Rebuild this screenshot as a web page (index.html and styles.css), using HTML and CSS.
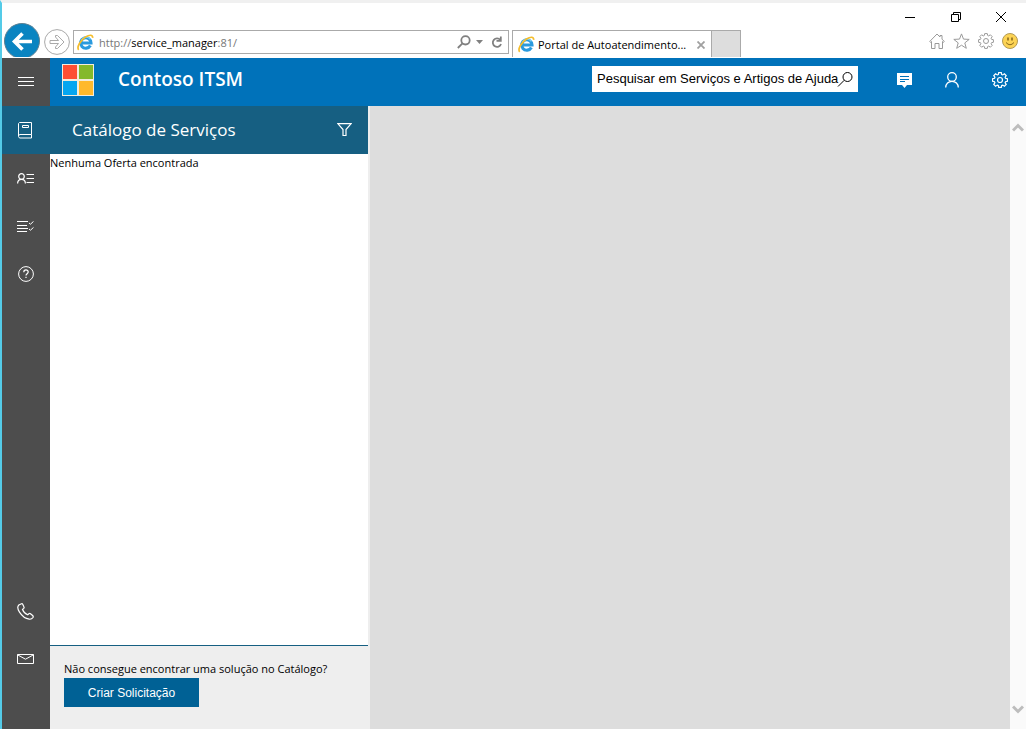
FILE: index.html
```html
<!DOCTYPE html>
<html lang="pt-BR">
<head>
  <meta charset="UTF-8">
  <meta name="viewport" content="width=device-width, initial-scale=1.0">
  <title>Portal de Autoatendimento</title>
  <link rel="stylesheet" href="styles.css">
</head>
<body>
  <svg width="0" height="0" class="defs" aria-hidden="true">
    <symbol id="ie" viewBox="0 0 16 16">
      <path d="M12.600 10.800a4.900 4.900 0 1 1 .6-2.400H4.400" fill="none" stroke="#2a9ade" stroke-width="2.900"/>
      <path d="M4 5.600a5.200 5.200 0 0 1 8.600-.5" fill="none" stroke="#7fd2f6" stroke-width="1"/>
      <path d="M1.600 14.900C-.6 12.600 3.200 5.900 8 2.900c3.600-2.300 7-2.600 6.700.8" fill="none" stroke="#f5bd2c" stroke-width="1.600"/>
    </symbol>
    <symbol id="gear" viewBox="0 0 16 16">
      <path d="M6.700 .6h2.600l.4 1.900 1 .4 1.700-1.100 1.800 1.800-1.100 1.700.4 1 1.900.4v2.600l-1.900.4-.4 1 1.100 1.700-1.800 1.800-1.700-1.100-1 .4-.4 1.900H6.700l-.4-1.900-1-.4-1.700 1.100-1.800-1.800 1.100-1.700-.4-1-1.900-.4V6.700l1.900-.4.4-1-1.100-1.700 1.800-1.800 1.700 1.100 1-.4z"/>
      <circle cx="8" cy="8" r="2.500"/>
    </symbol>
  </svg>

  <div class="chrome">
    <div class="toolbar">
      <button class="back" aria-label="Voltar">
        <svg width="36" height="34" viewBox="0 0 36 34"><circle cx="18" cy="18" r="17.500" fill="#0a84c1" stroke="#5d7f91"/><path d="M28 18.500H10M18.500 10.500l-8 8 8 8" fill="none" stroke="#fff" stroke-width="3.600"/></svg>
      </button>
      <button class="forward" aria-label="Avançar">
        <svg width="26" height="26" viewBox="0 0 26 26" fill="none" stroke="#a9a9a9"><circle cx="13" cy="13" r="12.400"/><path d="M6 11.500h8.500L11.500 8V6.500h2l6.500 6.500-6.500 6.500h-2V18l3-3.500H6z"/></svg>
      </button>
      <div class="address">
        <svg width="17" height="17"><use href="#ie"/></svg>
        <span class="url">http://<b>service_manager</b>:81/</span>
        <button aria-label="Pesquisar"><svg width="14" height="14" viewBox="0 0 14 14" fill="none" stroke="#808080" stroke-width="1.800"><circle cx="8.500" cy="5.300" r="4.200"/><path d="M5.500 8.300l-4.700 4.700"/></svg></button>
        <button aria-label="Histórico"><svg width="7" height="4" viewBox="0 0 7 4"><path d="M0 0h7L3.500 4z" fill="#808080"/></svg></button>
        <button aria-label="Atualizar" class="refresh"><svg width="12" height="13" viewBox="0 0 12 13" fill="none" stroke="#808080" stroke-width="1.800"><path d="M9.300 4A4.200 4.200 0 1 0 10 8"/><path d="M9.800 .5v4.400H5.500"/></svg></button>
      </div>
      <div class="tabs">
        <div class="tab">
          <svg width="17" height="17"><use href="#ie"/></svg>
          <span>Portal de Autoatendimento...</span>
          <button aria-label="Fechar guia"><svg width="8" height="8" viewBox="0 0 8 8" stroke="#a0a0a0" stroke-width="1.800"><path d="M.5.5l7 7M7.500.5l-7 7"/></svg></button>
        </div>
        <button class="new-tab" aria-label="Nova guia"></button>
      </div>
    </div>
    <div class="window-side">
      <div class="caption">
        <button aria-label="Minimizar"><svg width="10" height="10" viewBox="0 0 10 10"><path d="M0 5.500h10" stroke="#000"/></svg></button>
        <button aria-label="Restaurar"><svg width="10" height="10" viewBox="0 0 10 10" fill="none" stroke="#000"><path d="M.5 2.500h7v7h-7zM2.500 2.500v-2h7v7h-2"/></svg></button>
        <button aria-label="Fechar"><svg width="10" height="10" viewBox="0 0 10 10" stroke="#000"><path d="M0 0l10 10M10 0L0 10"/></svg></button>
      </div>
      <div class="tools">
        <button aria-label="Início"><svg width="16" height="16" viewBox="0 0 16 16" fill="none" stroke="#9a9a9a"><path d="M.7 8.500L8 1l3 3V2.500h2v3.600l2.300 2.400-1 .8-.8-.8v7h-3.500v-5H6v5H2.500v-7l-.8.8z"/></svg></button>
        <button aria-label="Favoritos"><svg width="17" height="16" viewBox="0 0 17 16" fill="none" stroke="#9a9a9a"><path d="M8.500.9l2 5.200 5.700.3-4.400 3.500 1.500 5.400-4.800-3.100-4.800 3.100 1.500-5.400L.8 6.400l5.700-.3z"/></svg></button>
        <button aria-label="Ferramentas"><svg width="16" height="16" fill="none" stroke="#9a9a9a"><use href="#gear"/></svg></button>
        <button aria-label="Comentários"><svg width="16" height="16" viewBox="0 0 16 16"><circle cx="8" cy="8" r="7.500" fill="#fcd354" stroke="#b29a56"/><path d="M6 4.500v3M10 4.500v3" stroke="#8b6a1c" stroke-width="1.600"/><path d="M4 9.500q4 4.500 8 0" fill="none" stroke="#8b6a1c"/></svg></button>
      </div>
    </div>
  </div>

  <div class="app">
    <nav class="rail">
      <button aria-label="Menu"><svg width="16" height="10" viewBox="0 0 16 10"><path d="M0 .5h16M0 4.500h16M0 8.500h16" stroke="#fff"/></svg></button>
      <a href="#" class="active" aria-label="Catálogo de Serviços"><svg width="14" height="17" viewBox="0 0 14 17" fill="none" stroke="#fff"><path d="M13.500 12.500V.5h-12L.5 1.500v13l1 1.500h12v-3.500h-12L.5 14M4.500 3.500h6v2h-6z"/></svg></a>
      <a href="#" aria-label="Minhas Solicitações"><svg width="17" height="11" viewBox="0 0 17 11" fill="none" stroke="#fff"><circle cx="4.500" cy="3.500" r="2.800" stroke-width="1.200"/><path d="M.6 10.500C.6 8 2.200 6.300 4.500 6.300s3.900 1.700 3.900 4.200" stroke-width="1.200"/><path d="M9.500 1.500H17M9.500 5.500H17M9.500 9.500H17"/></svg></a>
      <a href="#" aria-label="Minhas Atividades"><svg width="17" height="11" viewBox="0 0 17 11" fill="none" stroke="#fff"><path d="M0 .5h11M0 4.500h10M0 7.500h11M0 10.500h10M12 2l1.500 1.200L16.500.4M12 8l1.500 1.200 3-2.800"/></svg></a>
      <a href="#" aria-label="Artigos de Ajuda"><svg width="16" height="16" viewBox="0 0 16 16" fill="none" stroke="#fff"><circle cx="8" cy="8" r="7.400"/><path d="M5.800 6.200c0-3 4.400-2.900 4.400-.2C10.200 7.700 8 7.700 8 9.500M8 10.700V12" stroke-width="1.200"/></svg></a>
      <a href="#" class="phone" aria-label="Telefone"><svg width="17" height="17" viewBox="0 0 17 17" fill="none" stroke="#fff" stroke-width="1.200"><path d="M4.500.8L1.800 2C.4 3.500.4 6 2.500 9.200c2.400 3.700 6 6.600 9.700 7 1.600.2 3-.5 3.800-1.700.5-.8.2-1.400-.4-2l-2.100-1.800c-.5-.4-1.100-.4-1.600 0l-1.200 1c-2-.7-4.300-3-5.200-5.200l1.200-1.100c.5-.5.5-1 .2-1.600L5.700 1.200C5.400.7 5 .6 4.500.8z"/></svg></a>
      <a href="#" aria-label="E-mail"><svg width="17" height="10" viewBox="0 0 17 10" fill="none" stroke="#fff"><path d="M.5.5h16v9H.5zM.5.800l8 4.400 8-4.400"/></svg></a>
    </nav>

    <div class="main">
      <header class="header">
        <svg class="logo" width="32" height="32" viewBox="0 0 32 32"><path d="M0 0h32v32H0z" fill="#f3ecdc"/><path d="M1 1h14v14H1z" fill="#fe4e32"/><path d="M17 1h14v14H17z" fill="#84b92b"/><path d="M1 17h14v14H1z" fill="#05a6f0"/><path d="M17 17h14v14H17z" fill="#ffb92c"/></svg>
        <h1>Contoso ITSM</h1>
        <form class="search">
          <input type="text" aria-label="Pesquisar" placeholder="Pesquisar em Serviços e Artigos de Ajuda">
          <button type="button" aria-label="Buscar"><svg width="16" height="16" viewBox="0 0 16 16" fill="none" stroke="#000"><circle cx="10.500" cy="6" r="4.500"/><path d="M7.300 9.200L1 15.500"/></svg></button>
        </form>
        <div class="actions">
          <button aria-label="Mensagens"><svg width="15" height="15" viewBox="0 0 15 15"><path d="M0 0h15v12h-5l-2.500 3L5 12H0z" fill="#fff"/><path d="M3 3.500h9M3 6.500h9M3 8.500h5" stroke="#0072ba"/></svg></button>
          <button aria-label="Usuário"><svg width="14" height="16" viewBox="0 0 14 16" fill="none" stroke="#fff" stroke-width="1.300"><circle cx="7" cy="5" r="4.300"/><path d="M.7 15.500C.7 11.800 3.500 9.300 7 9.300s6.300 2.500 6.300 6.200"/></svg></button>
          <button aria-label="Configurações"><svg width="16" height="16" fill="none" stroke="#fff" stroke-width="1.200"><use href="#gear"/></svg></button>
        </div>
      </header>

      <div class="workspace">
        <section class="panel">
          <div class="panel-title">
            <h2>Catálogo de Serviços</h2>
            <button aria-label="Filtrar"><svg width="15" height="13" viewBox="0 0 15 13" fill="none" stroke="#fff" stroke-width="1.200"><path d="M.8.600h13.400L9 6.500v6H6v-6z"/></svg></button>
          </div>
          <p class="empty">Nenhuma Oferta encontrada</p>
          <div class="panel-footer">
            <p>Não consegue encontrar uma solução no Catálogo?</p>
            <button>Criar Solicitação</button>
          </div>
        </section>
        <main class="content"></main>
        <div class="scrollbar">
          <svg width="12" height="9" viewBox="0 0 12 9" fill="none" stroke="#bdbdbd" stroke-width="3"><path d="M1 7.500l5-5 5 5"/></svg>
          <svg width="12" height="9" viewBox="0 0 12 9" fill="none" stroke="#bdbdbd" stroke-width="3"><path d="M1 1.500l5 5 5-5"/></svg>
        </div>
      </div>
    </div>
  </div>
</body>
</html>
```
FILE: styles.css
```css
* {
  box-sizing: border-box;
}

body {
  margin: 0;
  min-height: 100vh;
  display: flex;
  flex-direction: column;
  border-top: 3px solid #f0f0f0;
  border-left: 2px solid #54cbe8;
  font-family: "Open Sans", "Noto Sans", sans-serif;
  font-size: 11px;
  color: #000;
  background-color: #fff;
}

h1, h2, p {
  margin: 0;
}

button {
  padding: 0;
  border: none;
  background: none;
  font-family: inherit;
}

svg {
  display: block;
  flex: none;
}

.defs {
  position: absolute;
}

/* browser window */
.chrome {
  display: flex;
  height: 55px;
}

.toolbar {
  flex: 1;
  display: flex;
  align-items: flex-end;
  padding-left: 2px;
}

.back {
  margin-bottom: 1px;
}

.forward {
  margin: 0 3px 3px 4px;
}

.address {
  flex: 1;
  display: flex;
  align-items: center;
  gap: 5px;
  height: 24px;
  margin: 0 3px 4px 0;
  padding: 0 5px 0 3px;
  border: 1px solid #aaa;
}

.url {
  flex: 1;
  color: #777;
}

.url b {
  font-weight: normal;
  color: #000;
}

.refresh {
  margin-left: 3px;
}

.tabs {
  flex: 0 0 386px;
  display: flex;
  height: 27px;
  margin-bottom: 1px;
}

.tab {
  display: flex;
  align-items: center;
  gap: 3px;
  width: 200px;
  padding: 1px 6px 0 5px;
  border: 1px solid #aaa;
  border-bottom: none;
}

.tab span {
  flex: 1;
  white-space: nowrap;
}

.new-tab {
  width: 29px;
  border: 1px solid #aaa;
  border-left: none;
  border-bottom: none;
  background-color: #ddd;
}

.window-side {
  width: 128px;
}

.caption {
  display: flex;
  justify-content: space-between;
  align-items: center;
  height: 28px;
  padding: 0 20px 0 7px;
}

.tools {
  display: flex;
  justify-content: flex-end;
  align-items: center;
  gap: 8px;
  height: 20px;
  padding-right: 8px;
}

/* portal */
.app {
  flex: 1;
  display: flex;
}

.rail {
  flex: 0 0 48px;
  display: flex;
  flex-direction: column;
  padding-bottom: 46px;
  background-color: #4d4d4d;
}

.rail a,
.rail button {
  display: flex;
  justify-content: center;
  align-items: center;
  height: 48px;
  padding-right: 1px;
}

.rail .active {
  padding-right: 3px;
  background-color: #165f82;
}

.rail .phone {
  margin-top: auto;
}

.main {
  flex: 1;
  display: flex;
  flex-direction: column;
}

.header {
  display: flex;
  align-items: center;
  height: 48px;
  padding: 0 2px 4px 12px;
  color: #fff;
  background-color: #0072ba;
}

.header h1 {
  margin: 0 0 2px 24px;
  font-size: 19px;
  font-weight: 600;
  line-height: 24px;
}

.search {
  display: flex;
  align-items: center;
  width: 266px;
  height: 26px;
  margin: 0 22px 2px auto;
  padding: 0 5px;
  background-color: #fff;
}

.search input {
  flex: 1;
  min-width: 0;
  height: 24px;
  padding: 0 0 2px;
  border: none;
  outline: none;
  background: none;
  font-family: "Liberation Sans", Arial, sans-serif;
  font-size: 13px;
}

.search input::placeholder {
  color: #000;
}

/* the magnifier sits over the end of the text box */
.search button {
  margin-left: -16px;
}

.actions {
  display: flex;
}

.actions button {
  display: flex;
  justify-content: center;
  align-items: center;
  width: 48px;
  height: 44px;
}

.workspace {
  flex: 1;
  display: flex;
}

.panel {
  flex: 0 0 320px;
  display: flex;
  flex-direction: column;
  border-right: 2px solid #eee;
}

.panel-title {
  display: flex;
  justify-content: space-between;
  align-items: center;
  height: 48px;
  padding: 0 16px 2px 22px;
  color: #fff;
  background-color: #165f82;
}

.panel-title h2 {
  font-size: 17px;
  font-weight: normal;
}

.empty {
  flex: 1;
  line-height: 18px;
}

.panel-footer {
  padding: 14px 14px 22px;
  border-top: 1px solid #165f82;
  background-color: #eee;
  line-height: 18px;
  white-space: nowrap;
}

.panel-footer button {
  display: block;
  width: 135px;
  height: 29px;
  color: #fff;
  background-color: #006195;
  font-family: "Liberation Sans", Arial, sans-serif;
  font-size: 12px;
}

.content {
  flex: 1;
  background-color: #ddd;
}

.scrollbar {
  flex: 0 0 16px;
  display: flex;
  flex-direction: column;
  justify-content: space-between;
  align-items: center;
  padding: 17px 0 15px;
  background-color: #fafafa;
}
```
